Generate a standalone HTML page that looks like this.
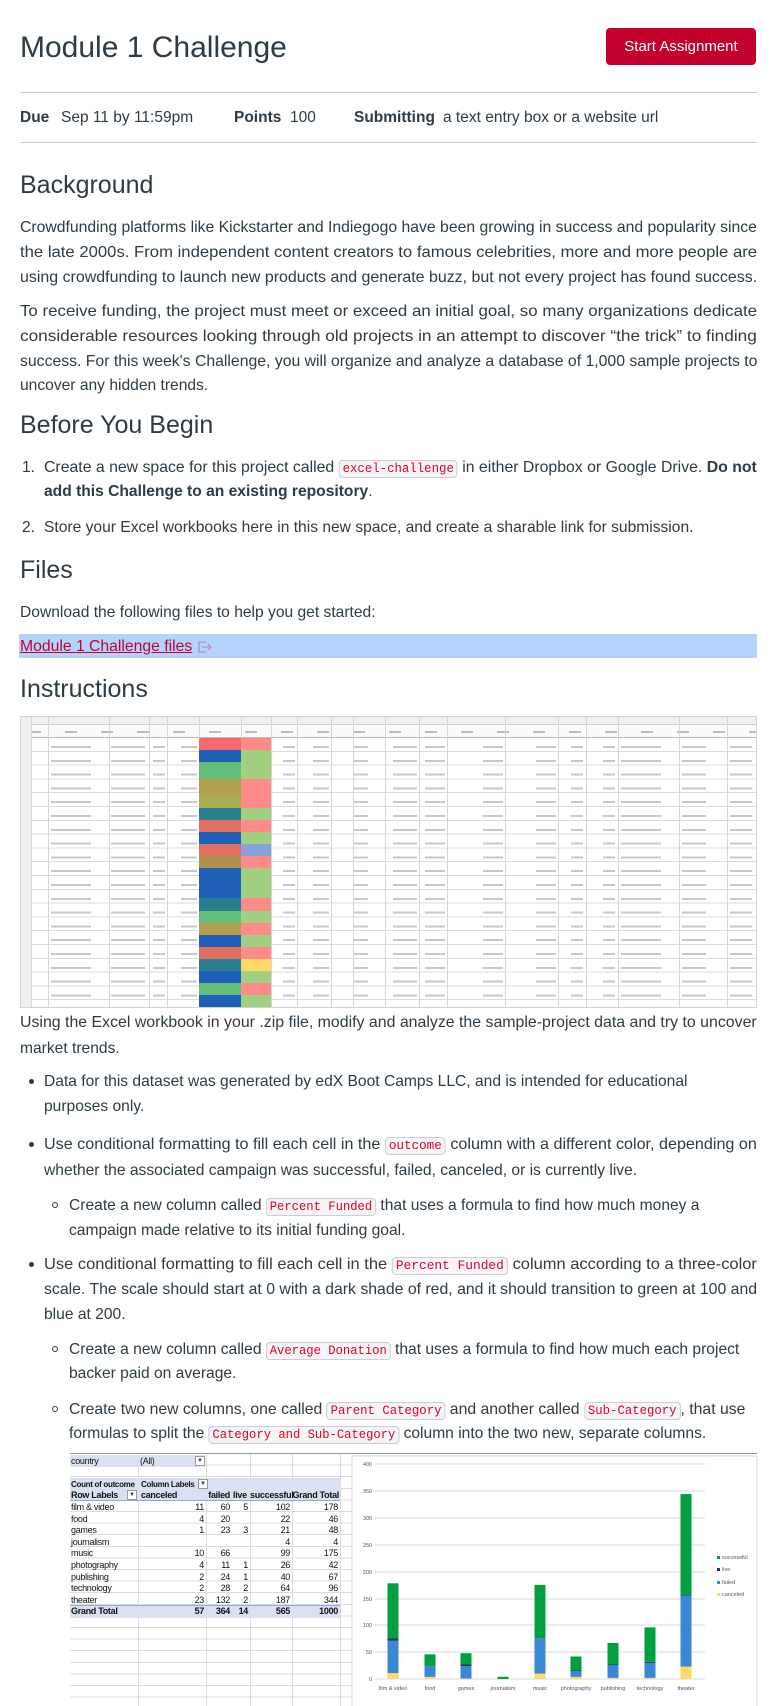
<!DOCTYPE html>
<html><head><meta charset="utf-8">
<style>
*{margin:0;padding:0;box-sizing:border-box}
body{width:774px;height:1706px;position:relative;background:#fff;font-family:"Liberation Sans",sans-serif;color:#2d3b45;overflow:hidden}
.a{position:absolute;white-space:nowrap}
.ln{position:absolute;white-space:nowrap;font-size:16px;line-height:25px;height:25px;left:20px;transform-origin:0 50%}
.h2{position:absolute;left:20px;font-size:25px;line-height:32px;font-weight:normal;white-space:nowrap}
.hr{position:absolute;left:20px;width:737px;height:1px;background:#c7cdd1}
code{font-family:"Liberation Mono",monospace;font-size:12.5px;color:#e0002b;background:#f5f5f5;border:1px solid #ccd;border-radius:4px;padding:1px 3px}
b{font-weight:bold}
.dot{position:absolute;width:5px;height:5px;border-radius:50%;background:#2d3b45}
.cir{position:absolute;width:6px;height:6px;border-radius:50%;border:1px solid #2d3b45}
.sheet{position:absolute;left:20px;top:716px;width:737px;height:292px;background:#fff;border:1px solid #d4d4d4;overflow:hidden}
.vl{position:absolute;top:0;bottom:0;width:1px;background:#d6d6d6}
.tx{position:absolute;top:21px;bottom:0;background:repeating-linear-gradient(transparent 0,transparent 8px,#c8c8c8 8px,#c8c8c8 10px,transparent 10px,transparent 13.8px)}
.pt{position:absolute;font-size:9px;line-height:11.6px;color:#111;white-space:nowrap;letter-spacing:-0.3px}
.m{position:absolute;top:105px;font-size:15.5px;line-height:25px;white-space:nowrap}
</style></head><body>

<div class="a" style="left:20px;top:29px;font-size:30px;line-height:38px">Module 1 Challenge</div>
<div class="a" style="left:606px;top:28px;width:150px;height:37px;background:#c4002e;border-radius:4px;color:#fff;font-size:15px;line-height:37px;text-align:center">Start Assignment</div>
<div class="hr" style="top:92px"></div>
<div class="m" style="left:20px"><b>Due</b></div>
<div class="m" style="left:61px">Sep 11 by 11:59pm</div>
<div class="m" style="left:234px"><b>Points</b></div>
<div class="m" style="left:290px">100</div>
<div class="m" style="left:354px"><b>Submitting</b></div>
<div class="m" style="left:443px">a text entry box or a website url</div>
<div class="hr" style="top:142px"></div>

<div class="h2" style="top:169px">Background</div>
<div class="ln fit" style="top:215px">Crowdfunding platforms like Kickstarter and Indiegogo have been growing in success and popularity since</div>
<div class="ln fit" style="top:240px">the late 2000s. From independent content creators to famous celebrities, more and more people are</div>
<div class="ln fit" style="top:265px">using crowdfunding to launch new products and generate buzz, but not every project has found success.</div>
<div class="ln fit" style="top:299px">To receive funding, the project must meet or exceed an initial goal, so many organizations dedicate</div>
<div class="ln fit" style="top:324px">considerable resources looking through old projects in an attempt to discover “the trick” to finding</div>
<div class="ln fit" style="top:349px">success. For this week's Challenge, you will organize and analyze a database of 1,000 sample projects to</div>
<div class="ln" style="top:373px">uncover any hidden trends.</div>

<div class="h2" style="top:409px">Before You Begin</div>
<div class="ln" style="top:455px;left:22px">1.</div>
<div class="ln fit2" style="top:455px;left:44px">Create a new space for this project called <code>excel-challenge</code> in either Dropbox or Google Drive. <b>Do not</b></div>
<div class="ln" style="top:479px;left:44px"><b>add this Challenge to an existing repository</b>.</div>
<div class="ln" style="top:515px;left:22px">2.</div>
<div class="ln" style="top:515px;left:44px">Store your Excel workbooks here in this new space, and create a sharable link for submission.</div>

<div class="h2" style="top:554px">Files</div>
<div class="ln" style="top:600px">Download the following files to help you get started:</div>
<div class="a" style="left:19px;top:634px;width:738px;height:24px;background:#b3d3fb"></div>
<div class="ln lk" style="top:634px;color:#c4002e;text-decoration:underline">Module 1 Challenge files</div>
<svg class="a" style="left:197px;top:640px" width="16" height="14" viewBox="0 0 16 14"><path d="M9 2H2v10h7M5 7h9M11 4l3 3-3 3" fill="none" stroke="#b28bd0" stroke-width="1.3"/></svg>

<div class="h2" style="top:673px">Instructions</div>

<div class="sheet">
  <div style="position:absolute;left:0;top:0;width:100%;height:8px;background:#f0f0f0;border-bottom:1px solid #ccc"></div>
  <div style="position:absolute;left:0;top:8px;width:100%;height:13px;background:#fafafa;border-bottom:1px solid #bbb;background-image:repeating-linear-gradient(90deg,transparent 0,transparent 8px,#bbb 8px,#bbb 20px,transparent 20px,transparent 36px);background-size:100% 2px;background-repeat:no-repeat;background-position:0 6px"></div>
  <div style="position:absolute;left:0;top:21px;width:100%;bottom:0;background:repeating-linear-gradient(#fff 0,#fff 12.8px,#dcdcdc 12.8px,#dcdcdc 13.8px)"></div>
  <div style="position:absolute;left:0;top:0;width:10px;bottom:0;background:#f0f0f0"></div>
  <div class="tx" style="left:30px;width:40px"></div>
  <div class="tx" style="left:90px;width:34px"></div>
  <div class="tx" style="left:132px;width:12px"></div>
  <div class="tx" style="left:160px;width:16px"></div>
  <div class="tx" style="left:262px;width:12px"></div>
  <div class="tx" style="left:292px;width:16px"></div>
  <div class="tx" style="left:333px;width:14px"></div>
  <div class="tx" style="left:372px;width:24px"></div>
  <div class="tx" style="left:404px;width:20px"></div>
  <div class="tx" style="left:462px;width:20px"></div>
  <div class="tx" style="left:515px;width:20px"></div>
  <div class="tx" style="left:550px;width:12px"></div>
  <div class="tx" style="left:582px;width:12px"></div>
  <div class="tx" style="left:600px;width:40px"></div>
  <div class="tx" style="left:661px;width:24px"></div>
  <div class="tx" style="left:709px;width:22px"></div>
  <div class="vl" style="left:10px"></div><div class="vl" style="left:27px"></div><div class="vl" style="left:88px"></div><div class="vl" style="left:128px"></div><div class="vl" style="left:146px"></div><div class="vl" style="left:178px"></div><div class="vl" style="left:220px"></div><div class="vl" style="left:250px"></div><div class="vl" style="left:276px"></div><div class="vl" style="left:310px"></div><div class="vl" style="left:332px"></div><div class="vl" style="left:364px"></div><div class="vl" style="left:398px"></div><div class="vl" style="left:426px"></div><div class="vl" style="left:484px"></div><div class="vl" style="left:537px"></div><div class="vl" style="left:565px"></div><div class="vl" style="left:597px"></div><div class="vl" style="left:658px"></div><div class="vl" style="left:706px"></div>
  <div style="position:absolute;left:178px;top:21px;width:42px;bottom:0;display:flex;flex-direction:column">
   <div style="flex:1;background:#f8696b"></div><div style="flex:1;background:#1f5fb5"></div><div style="flex:1.4;background:#63be7b"></div><div style="flex:1.4;background:#b0a050"></div><div style="flex:1;background:#a8ad52"></div><div style="flex:1;background:#2a7f8f"></div><div style="flex:1;background:#e07060"></div><div style="flex:1;background:#1f5fb5"></div><div style="flex:1;background:#e07060"></div><div style="flex:1;background:#b09050"></div><div style="flex:1.5;background:#1f5fb5"></div><div style="flex:1;background:#1f5fb5"></div><div style="flex:1;background:#2a7f8f"></div><div style="flex:1;background:#63be7b"></div><div style="flex:1;background:#b0a050"></div><div style="flex:1;background:#1f5fb5"></div><div style="flex:1;background:#e07060"></div><div style="flex:1;background:#2a7f8f"></div><div style="flex:1;background:#1f5fb5"></div><div style="flex:1;background:#63be7b"></div><div style="flex:1;background:#1f5fb5"></div>
  </div>
  <div style="position:absolute;left:220px;top:21px;width:30px;bottom:0;display:flex;flex-direction:column">
   <div style="flex:1;background:#ff8a8a"></div><div style="flex:1;background:#a0d080"></div><div style="flex:1.4;background:#a0d080"></div><div style="flex:1.4;background:#ff8a8a"></div><div style="flex:1;background:#ff8a8a"></div><div style="flex:1;background:#a0d080"></div><div style="flex:1;background:#ff8a8a"></div><div style="flex:1;background:#a0d080"></div><div style="flex:1;background:#8aa0d8"></div><div style="flex:1;background:#ff8a8a"></div><div style="flex:1.5;background:#a0d080"></div><div style="flex:1;background:#a0d080"></div><div style="flex:1;background:#ff8a8a"></div><div style="flex:1;background:#a0d080"></div><div style="flex:1;background:#ff8a8a"></div><div style="flex:1;background:#a0d080"></div><div style="flex:1;background:#ff8a8a"></div><div style="flex:1;background:#ffd966"></div><div style="flex:1;background:#a0d080"></div><div style="flex:1;background:#ff8a8a"></div><div style="flex:1;background:#a0d080"></div>
  </div>
</div>

<div class="ln fit" style="top:1010px">Using the Excel workbook in your .zip file, modify and analyze the sample-project data and try to uncover</div>
<div class="ln" style="top:1036px">market trends.</div>

<div class="dot" style="left:29px;top:1079px"></div>
<div class="ln" style="top:1069px;left:44px">Data for this dataset was generated by edX Boot Camps LLC, and is intended for educational</div>
<div class="ln" style="top:1094px;left:44px">purposes only.</div>
<div class="dot" style="left:29px;top:1142px"></div>
<div class="ln fit2" style="top:1132px;left:44px">Use conditional formatting to fill each cell in the <code>outcome</code> column with a different color, depending on</div>
<div class="ln" style="top:1158px;left:44px">whether the associated campaign was successful, failed, canceled, or is currently live.</div>
<div class="cir" style="left:52px;top:1202px"></div>
<div class="ln" style="top:1193px;left:69px">Create a new column called <code>Percent Funded</code> that uses a formula to find how much money a</div>
<div class="ln" style="top:1218px;left:69px">campaign made relative to its initial funding goal.</div>
<div class="dot" style="left:29px;top:1262px"></div>
<div class="ln fit2" style="top:1252px;left:44px">Use conditional formatting to fill each cell in the <code>Percent Funded</code> column according to a three-color</div>
<div class="ln fit2" style="top:1277px;left:44px">scale. The scale should start at 0 with a dark shade of red, and it should transition to green at 100 and</div>
<div class="ln" style="top:1302px;left:44px">blue at 200.</div>
<div class="cir" style="left:52px;top:1346px"></div>
<div class="ln" style="top:1337px;left:69px">Create a new column called <code>Average Donation</code> that uses a formula to find how much each project</div>
<div class="ln" style="top:1361px;left:69px">backer paid on average.</div>
<div class="cir" style="left:52px;top:1406px"></div>
<div class="ln fit3" style="top:1397px;left:69px">Create two new columns, one called <code>Parent Category</code> and another called <code>Sub-Category</code>, that use</div>
<div class="ln" style="top:1421px;left:69px">formulas to split the <code>Category and Sub-Category</code> column into the two new, separate columns.</div>

<!-- pivot -->
<div class="a" style="left:70px;top:1454px;width:687px;height:252px;background:repeating-linear-gradient(#fff 0,#fff 10.6px,#dcdcdc 10.6px,#dcdcdc 11.6px)"></div>
<div class="a" style="left:70px;top:1453px;width:687px;height:1px;background:#999"></div>
<div class="a" style="left:138px;top:1454px;width:1px;height:252px;background:#dcdcdc"></div>
<div class="a" style="left:206px;top:1454px;width:1px;height:252px;background:#dcdcdc"></div>
<div class="a" style="left:250px;top:1454px;width:1px;height:252px;background:#dcdcdc"></div>
<div class="a" style="left:292px;top:1454px;width:1px;height:252px;background:#dcdcdc"></div>
<div class="a" style="left:340px;top:1454px;width:1px;height:252px;background:#dcdcdc"></div>
<div class="a" style="left:70px;top:1455px;width:135px;height:12px;background:#d9e1f2"></div>
<div class="a" style="left:70px;top:1478px;width:270px;height:23px;background:#d9e1f2;border-bottom:1px solid #8ea9db"></div>
<div class="a" style="left:70px;top:1605px;width:270px;height:13px;background:#d9e1f2;border-top:1px solid #8ea9db"></div>
<div class="pt" style="left:71px;top:1456px">country</div><div class="pt" style="left:140px;top:1456px">(All)</div>
<div class="a" style="left:195px;top:1456px;width:10px;height:10px;border:1px solid #999;background:#fff;font-size:6px;text-align:center;line-height:9px">▼</div>
<div class="pt" style="left:71px;top:1479px;font-weight:bold;font-size:8px">Count of outcome</div><div class="pt" style="left:141px;top:1479px;font-weight:bold;font-size:8px">Column Labels</div>
<div class="a" style="left:198px;top:1479px;width:10px;height:10px;border:1px solid #999;background:#fff;font-size:6px;text-align:center;line-height:9px">▼</div>
<div class="pt" style="left:71px;top:1490px;font-weight:bold">Row Labels</div>
<div class="a" style="left:127px;top:1490px;width:10px;height:10px;border:1px solid #999;background:#fff;font-size:6px;text-align:center;line-height:9px">▼</div>
<div class="pt" style="left:141px;top:1490px;font-weight:bold">canceled</div><div class="pt" style="left:206px;top:1490px;font-weight:bold;width:24px;text-align:right">failed</div><div class="pt" style="left:233px;top:1490px;font-weight:bold">live</div><div class="pt" style="left:250px;top:1490px;font-weight:bold;width:41px;text-align:right">successful</div><div class="pt" style="left:292px;top:1490px;font-weight:bold;width:47px;text-align:right">Grand Total</div>

<div class="pt" style="left:71px;top:1502px">film &amp; video<br>food<br>games<br>journalism<br>music<br>photography<br>publishing<br>technology<br>theater<br><b>Grand Total</b></div>
<div class="pt" style="left:160px;width:44px;text-align:right;top:1502px">11<br>4<br>1<br>&nbsp;<br>10<br>4<br>2<br>2<br>23<br><b>57</b></div>
<div class="pt" style="left:205px;width:25px;text-align:right;top:1502px">60<br>20<br>23<br>&nbsp;<br>66<br>11<br>24<br>28<br>132<br><b>364</b></div>
<div class="pt" style="left:232px;width:16px;text-align:right;top:1502px">5<br>&nbsp;<br>3<br>&nbsp;<br>&nbsp;<br>1<br>1<br>2<br>2<br><b>14</b></div>
<div class="pt" style="left:250px;width:40px;text-align:right;top:1502px">102<br>22<br>21<br>4<br>99<br>26<br>40<br>64<br>187<br><b>565</b></div>
<div class="pt" style="left:292px;width:46px;text-align:right;top:1502px">178<br>46<br>48<br>4<br>175<br>42<br>67<br>96<br>344<br><b>1000</b></div>

<svg class="a" style="left:0;top:0" width="774" height="1706" viewBox="0 0 774 1706">
<rect x="352" y="1456" width="405" height="260" fill="#fff" stroke="#d9d9d9"/>
<g stroke="#d9d9d9" stroke-width="1">
<line x1="375" x2="705" y1="1464" y2="1464"/><line x1="375" x2="705" y1="1491" y2="1491"/><line x1="375" x2="705" y1="1518" y2="1518"/><line x1="375" x2="705" y1="1545" y2="1545"/><line x1="375" x2="705" y1="1572" y2="1572"/><line x1="375" x2="705" y1="1599" y2="1599"/><line x1="375" x2="705" y1="1625" y2="1625"/><line x1="375" x2="705" y1="1652" y2="1652"/><line x1="375" x2="705" y1="1679" y2="1679"/>
</g>
<g font-family="Liberation Sans" font-size="5.5" fill="#555" text-anchor="end">
<text x="372" y="1466">400</text><text x="372" y="1493">350</text><text x="372" y="1520">300</text><text x="372" y="1547">250</text><text x="372" y="1574">200</text><text x="372" y="1601">150</text><text x="372" y="1627">100</text><text x="372" y="1654">50</text><text x="372" y="1681">0</text>
</g>
<g>
<rect x="387.5" y="1673.1" width="11" height="5.9" fill="#ffd966"/><rect x="387.5" y="1640.8" width="11" height="32.3" fill="#3a87d6"/><rect x="387.5" y="1638.1" width="11" height="2.7" fill="#203864"/><rect x="387.5" y="1583.3" width="11" height="54.8" fill="#00a040"/>
<rect x="424.5" y="1676.9" width="11" height="2.1" fill="#ffd966"/><rect x="424.5" y="1666.1" width="11" height="10.8" fill="#3a87d6"/><rect x="424.5" y="1654.3" width="11" height="11.8" fill="#00a040"/>
<rect x="460.5" y="1678.5" width="11" height="0.5" fill="#ffd966"/><rect x="460.5" y="1666.1" width="11" height="12.4" fill="#3a87d6"/><rect x="460.5" y="1664.5" width="11" height="1.6" fill="#203864"/><rect x="460.5" y="1653.2" width="11" height="11.3" fill="#00a040"/>
<rect x="497.5" y="1676.8" width="11" height="2.2" fill="#00a040"/>
<rect x="534.5" y="1673.6" width="11" height="5.4" fill="#ffd966"/><rect x="534.5" y="1638.1" width="11" height="35.5" fill="#3a87d6"/><rect x="534.5" y="1584.9" width="11" height="53.2" fill="#00a040"/>
<rect x="570.5" y="1676.9" width="11" height="2.1" fill="#ffd966"/><rect x="570.5" y="1671" width="11" height="5.9" fill="#3a87d6"/><rect x="570.5" y="1670.5" width="11" height="0.5" fill="#203864"/><rect x="570.5" y="1656.5" width="11" height="14" fill="#00a040"/>
<rect x="607.5" y="1677.9" width="11" height="1.1" fill="#ffd966"/><rect x="607.5" y="1665" width="11" height="12.9" fill="#3a87d6"/><rect x="607.5" y="1664.5" width="11" height="0.5" fill="#203864"/><rect x="607.5" y="1643" width="11" height="21.5" fill="#00a040"/>
<rect x="644.5" y="1677.9" width="11" height="1.1" fill="#ffd966"/><rect x="644.5" y="1662.9" width="11" height="15" fill="#3a87d6"/><rect x="644.5" y="1661.8" width="11" height="1.1" fill="#203864"/><rect x="644.5" y="1627.4" width="11" height="34.4" fill="#00a040"/>
<rect x="680.5" y="1666.6" width="11" height="12.4" fill="#ffd966"/><rect x="680.5" y="1595.7" width="11" height="70.9" fill="#3a87d6"/><rect x="680.5" y="1594.6" width="11" height="1.1" fill="#203864"/><rect x="680.5" y="1494.1" width="11" height="100.5" fill="#00a040"/>
</g>
<g font-family="Liberation Sans" font-size="5.5" fill="#555" text-anchor="middle">
<text x="393" y="1690">film &amp; video</text><text x="430" y="1690">food</text><text x="466" y="1690">games</text><text x="503" y="1690">journalism</text><text x="540" y="1690">music</text><text x="576" y="1690">photography</text><text x="613" y="1690">publishing</text><text x="650" y="1690">technology</text><text x="686" y="1690">theater</text>
</g>
<g font-family="Liberation Sans" font-size="5.5" fill="#555">
<rect x="717" y="1556" width="3" height="3" fill="#00a040"/><text x="722" y="1559">successful</text>
<rect x="717" y="1568" width="3" height="3" fill="#203864"/><text x="722" y="1571">live</text>
<rect x="717" y="1581" width="3" height="3" fill="#3a87d6"/><text x="722" y="1584">failed</text>
<rect x="717" y="1593" width="3" height="3" fill="#ffd966"/><text x="722" y="1596">canceled</text>
</g>
</svg>

<script>
document.querySelectorAll('.fit,.fit2,.fit3').forEach(function(e){
  var left=parseFloat(e.style.left)||20;
  var target=757-left;
  if(e.classList.contains('fit3')) target=757-left-12;
  var w=e.scrollWidth;
  if(w>0) e.style.transform='scaleX('+(target/w)+')';
});
document.querySelectorAll('.lk').forEach(function(e){
  var w=e.scrollWidth; if(w>0) e.style.transform='scaleX('+(172/w)+')';
});
document.querySelectorAll('.ln:not(.fit):not(.fit2):not(.fit3):not(.lk)').forEach(function(e){
  var left=parseFloat(e.style.left)||20;
  var w=e.scrollWidth;
  var s=0.975; if(left+w*s>757) s=(757-left)/w;
  e.style.transform='scaleX('+s+')';
});
</script>
</body></html>
